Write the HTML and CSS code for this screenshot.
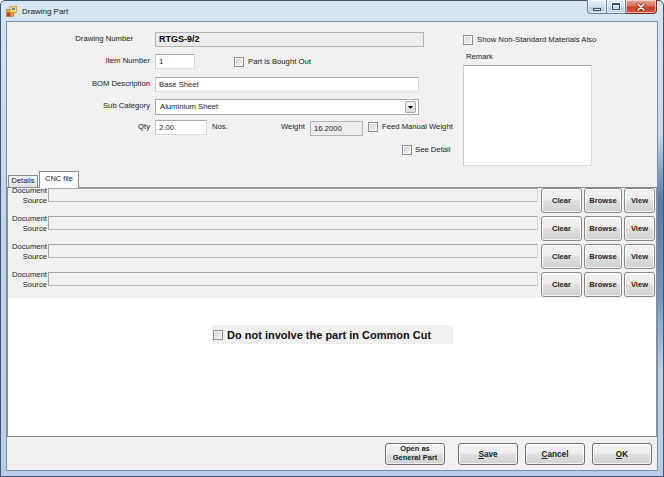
FILE: index.html
```html
<!DOCTYPE html>
<html lang="en">
<head>
<meta charset="utf-8">
<title>Drawing Part</title>
<link rel="stylesheet" href="styles.css">
</head>
<body>
<div class="window">
  <div class="titlebar">
    <svg class="appicon" width="11" height="11" viewBox="0 0 11 11">
      <rect x="0.5" y="3.5" width="7" height="7" fill="#e9a23a" stroke="#a46a1c" stroke-width="0.6"/>
      <rect x="4" y="0.5" width="6.5" height="6" fill="#f7d65c" stroke="#b48a25" stroke-width="0.6"/>
      <rect x="1" y="6.5" width="3.5" height="3.5" fill="#c8402c"/>
      <rect x="6" y="2" width="3" height="2" fill="#5a8fd0"/>
    </svg>
    <span class="title">Drawing Part</span>
    <div class="caption">
      <div class="cbtn cmin"><span class="dash"></span></div>
      <div class="cbtn cmax"><span class="sq"></span></div>
      <div class="cbtn cclose">
        <svg width="10" height="8" viewBox="0 0 10 8">
          <path d="M2 1 L8 7 M8 1 L2 7" stroke="#7a2418" stroke-width="3" stroke-linecap="round"/>
          <path d="M2 1 L8 7 M8 1 L2 7" stroke="#ffffff" stroke-width="1.6" stroke-linecap="round"/>
        </svg>
      </div>
    </div>
  </div>

  <div class="client">
    <div class="top">
      <div class="form">
        <div class="row row-dn">
          <span class="lbl lbl-dn">Drawing Number</span>
          <div class="ro dn-box">RTGS-9/2</div>
        </div>
        <div class="row row-item">
          <span class="lbl">Item Number</span>
          <div class="tb item-box">1</div>
          <div class="check bought"><span class="chk"></span><span>Part is Bought Out</span></div>
        </div>
        <div class="row row-bom">
          <span class="lbl">BOM Description</span>
          <div class="tb bom-box">Base Sheet</div>
        </div>
        <div class="row row-sub">
          <span class="lbl">Sub Category</span>
          <div class="combo">
            <span class="combo-text">Aluminium Sheet</span>
            <span class="drop">
              <svg width="5" height="3" viewBox="0 0 5 3"><path d="M0 0 H5 L2.5 3 Z" fill="#000"/></svg>
            </span>
          </div>
        </div>
        <div class="row row-qty">
          <span class="lbl">Qty</span>
          <div class="tb qty-box">2.00</div>
          <span class="nos">Nos.</span>
          <span class="wlbl">Weight</span>
          <div class="ro weight-box">16.2000</div>
          <div class="check feed"><span class="chk"></span><span>Feed Manual Weight</span></div>
        </div>
        <div class="row row-see">
          <div class="check see"><span class="chk"></span><span>See Detail</span></div>
        </div>
      </div>
      <div class="side">
        <div class="check"><span class="chk"></span><span>Show Non-Standard Materials Also</span></div>
        <div class="remark-lbl">Remark</div>
        <div class="remark"></div>
      </div>
    </div>

    <div class="tabs">
      <div class="tab">Details</div>
      <div class="tab active">CNC file</div>
    </div>

    <div class="panel">
      <div class="docs">
        <div class="docrow">
          <div class="doclbl">Document<br>Source</div>
          <div class="docbox"></div>
          <div class="btn dbtn clear">Clear</div>
          <div class="btn dbtn browse">Browse</div>
          <div class="btn dbtn view">View</div>
        </div>
        <div class="docrow">
          <div class="doclbl">Document<br>Source</div>
          <div class="docbox"></div>
          <div class="btn dbtn clear">Clear</div>
          <div class="btn dbtn browse">Browse</div>
          <div class="btn dbtn view">View</div>
        </div>
        <div class="docrow">
          <div class="doclbl">Document<br>Source</div>
          <div class="docbox"></div>
          <div class="btn dbtn clear">Clear</div>
          <div class="btn dbtn browse">Browse</div>
          <div class="btn dbtn view">View</div>
        </div>
        <div class="docrow last">
          <div class="doclbl">Document<br>Source</div>
          <div class="docbox"></div>
          <div class="btn dbtn clear">Clear</div>
          <div class="btn dbtn browse">Browse</div>
          <div class="btn dbtn view">View</div>
        </div>
      </div>
      <div class="cc-area">
        <div class="cc"><span class="chk"></span><span>Do not involve the part in Common Cut</span></div>
      </div>
    </div>

    <div class="bottombar">
      <div class="btn bbtn open">Open as<br>General Part</div>
      <div class="btn bbtn save"><span><u>S</u>ave</span></div>
      <div class="btn bbtn cancel"><span><u>C</u>ancel</span></div>
      <div class="btn bbtn ok"><span><u>O</u>K</span></div>
    </div>
  </div>
</div>
</body>
</html>
```
FILE: styles.css
```css
* { box-sizing: border-box; }
html, body { margin: 0; padding: 0; }
body {
  width: 664px;
  height: 477px;
  overflow: hidden;
  background: #fff;
  font-family: "Liberation Sans", Arial, sans-serif;
  font-size: 7.7px;
  color: #1c1c1c;
}

/* window frame */
.window {
  width: 664px;
  height: 477px;
  display: flex;
  flex-direction: column;
  padding: 0 5px 5px;
  border: 1px solid #3d566f;
  border-radius: 5px 5px 0 0;
  background:
    linear-gradient(to bottom, rgba(0,0,0,0) 28%, #4f7db0 42%, #6f97c3 62%, rgba(0,0,0,0) 78%) right top / 6px 100% no-repeat,
    linear-gradient(to bottom, #d7e5f3 0%, #c6d9ed 25%, #b7cde6 100%);
}
.titlebar {
  flex: none;
  height: 20px;
  display: flex;
  align-items: center;
}
.appicon { flex: none; margin-right: 5px; }
.title {
  font-family: "Liberation Sans", Arial, sans-serif;
  font-size: 8px;
  color: #15202c;
}
.caption {
  margin-left: auto;
  align-self: flex-start;
  display: flex;
  margin-top: -1px;
  margin-right: 1px;
}
.cbtn {
  height: 14px;
  border: 1px solid #6c84a0;
  border-top: none;
  display: flex;
  align-items: center;
  justify-content: center;
  box-shadow: inset 0 0 0 1px rgba(255,255,255,0.55);
}
.cmin {
  width: 20px;
  border-radius: 0 0 0 4px;
  background: linear-gradient(#e6eef7 0%, #d2dfee 50%, #bccde2 51%, #c9d9ec 100%);
}
.cmax {
  width: 19px;
  border-left: none;
  background: linear-gradient(#e6eef7 0%, #d2dfee 50%, #bccde2 51%, #c9d9ec 100%);
}
.cclose {
  width: 31px;
  border-left: none;
  border-color: #7f2a1e;
  border-radius: 0 0 4px 0;
  background: linear-gradient(#e7a597 0%, #d9705c 45%, #c7402a 55%, #d3573d 100%);
}
.dash {
  width: 8px;
  height: 3px;
  margin-top: 5px;
  background: #f4f7fb;
  border: 1px solid #3d4f66;
}
.sq {
  width: 8px;
  height: 7px;
  border: 1px solid #3d4f66;
  border-top-width: 2px;
  background: transparent;
  box-shadow: 0 0 0 1px rgba(255,255,255,0.7);
}

/* client area */
.client {
  flex: none;
  width: 652px;
  height: 450px;
  border: 1px solid #7a8ea7;
  background: #f0f0f0;
  display: flex;
  flex-direction: column;
}
.top {
  flex: none;
  height: 149px;
  display: flex;
}
.form {
  flex: none;
  width: 449px;
  padding-top: 10px;
}
.row {
  display: flex;
  align-items: flex-start;
}
.row-dn { height: 22px; }
.row-item { height: 23px; }
.row-bom { height: 22px; }
.row-sub { height: 21px; }
.row-qty { height: 24px; }

.lbl {
  flex: none;
  width: 143px;
  margin-right: 5px;
  text-align: right;
  line-height: 13px;
  white-space: nowrap;
}
.lbl-dn { padding-right: 17px; }

.tb {
  flex: none;
  height: 15px;
  border: 1px solid #abadb3;
  border-color: #a4a7ae #d6d9de #dadde2 #c6c9ce;
  background: #fff;
  padding: 0 3px;
  line-height: 13px;
  white-space: nowrap;
}
.ro {
  flex: none;
  height: 15px;
  border: 1px solid #b4b4b4;
  background: #ececec;
  padding: 0 3px;
  line-height: 13px;
  white-space: nowrap;
}
.dn-box {
  width: 269px;
  font-weight: bold;
  font-size: 9px;
  color: #000;
}
.item-box { width: 40px; }
.bom-box { width: 264px; }
.qty-box { width: 52px; }
.weight-box { width: 53px; margin-top: 1px; }

.combo {
  flex: none;
  width: 264px;
  height: 16px;
  border: 1px solid #a9acb2;
  background: #fff;
  display: flex;
  align-items: center;
  padding: 0 2px 0 4px;
}
.combo-text { flex: 1; line-height: 12px; }
.drop {
  width: 11px;
  height: 12px;
  border: 1px solid #a7a7a7;
  border-radius: 2px;
  background: linear-gradient(#f5f5f5, #dcdcdc);
  display: flex;
  align-items: center;
  justify-content: center;
}

.nos {
  flex: none;
  width: 69px;
  margin-left: 5px;
  line-height: 13px;
}
.wlbl {
  flex: none;
  width: 29px;
  line-height: 13px;
}

.check {
  display: flex;
  align-items: center;
  gap: 4px;
  line-height: 10px;
  white-space: nowrap;
}
.chk {
  flex: none;
  width: 10px;
  height: 10px;
  border: 1px solid #8e8f8f;
  background: linear-gradient(135deg, #c9c9c9 0%, #e6e6e6 60%, #f7f7f7 100%);
  box-shadow: inset 0 0 0 1px #f6f6f6;
}
.bought { margin-left: 39px; margin-top: 3px; }
.feed { margin-left: 5px; margin-top: 2px; }
.see { margin-left: 395px; margin-top: 1px; gap: 3px; }

.side {
  flex: 1;
  padding: 13px 0 0 7px;
}
.remark-lbl {
  margin-top: 7px;
  margin-left: 3px;
  line-height: 10px;
}
.remark {
  margin-top: 3px;
  width: 129px;
  height: 101px;
  border: 1px solid #abadb3;
  border-color: #a4a7ae #d6d9de #dadde2 #c6c9ce;
  background: #fff;
}

/* tabs */
.tabs {
  flex: none;
  height: 16px;
  display: flex;
  align-items: flex-end;
  padding-left: 1px;
  gap: 1px;
}
.tab {
  flex: none;
  width: 30px;
  height: 12px;
  border: 1px solid #898c95;
  border-bottom: none;
  background: linear-gradient(#f4f4f4, #e0e0e0);
  text-align: center;
  line-height: 10px;
  font-size: 7.5px;
  white-space: nowrap;
}
.tab.active {
  width: 40px;
  height: 17px;
  margin-bottom: -1px;
  padding-top: 1px;
  line-height: 11px;
  background: #fff;
  position: relative;
  z-index: 1;
}

.panel {
  flex: none;
  height: 250px;
  border: 1px solid #898c95;
  background: #fff;
  display: flex;
  flex-direction: column;
}
.docs {
  flex: none;
  background: #f0f0f0;
}
.docrow {
  display: flex;
  align-items: flex-start;
  height: 28px;
}
.docrow.last { height: 26px; }
.doclbl {
  flex: none;
  width: 40px;
  padding-right: 1px;
  margin-top: -2px;
  text-align: right;
  line-height: 10.2px;
  white-space: nowrap;
}
.docbox {
  flex: none;
  width: 490px;
  height: 14px;
  border: 1px solid #a6a6a6;
  border-color: #a3a3a3 #d9d9d9 #b9b9b9 #a3a3a3;
  background: #f0f0f0;
}

.btn {
  flex: none;
  display: flex;
  align-items: center;
  justify-content: center;
  text-align: center;
  border: 1px solid #8a8a8a;
  border-radius: 3px;
  background: linear-gradient(#f3f3f3 0%, #ebebeb 48%, #dedede 52%, #d0d0d0 100%);
  box-shadow: inset 0 0 0 1px rgba(255,255,255,0.75);
  font-weight: bold;
  color: #222;
  white-space: nowrap;
}
.dbtn {
  height: 25px;
  font-size: 7.6px;
}
.clear { width: 41px; margin-left: 3px; }
.browse { width: 38px; margin-left: 2px; }
.view { width: 31px; margin-left: 2px; }

.cc-area {
  flex: 1;
  padding: 27px 0 0 204px;
}
.cc {
  width: 241px;
  height: 19px;
  background: #f0f0f0;
  display: flex;
  align-items: center;
  gap: 4px;
  padding-left: 1px;
  font-weight: bold;
  font-size: 11px;
  color: #111;
  white-space: nowrap;
}

/* bottom buttons */
.bottombar {
  flex: 1;
  display: flex;
  justify-content: flex-end;
  align-items: flex-start;
  padding: 6px 5px 0 0;
}
.bbtn {
  width: 60px;
  height: 22px;
  font-size: 8.2px;
  border-color: #707070;
}
.open {
  font-size: 7.5px;
  line-height: 8.6px;
  margin-right: 13px;
}
.save { margin-right: 7px; }
.cancel { margin-right: 7px; }
u { text-decoration: underline; text-underline-offset: 1px; }
```
